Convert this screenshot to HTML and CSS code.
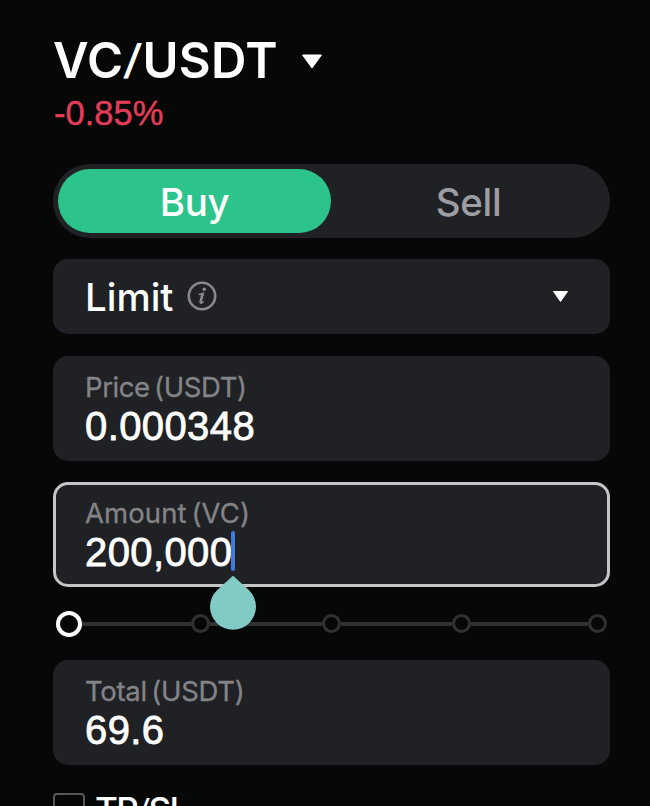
FILE: index.html
```html
<!DOCTYPE html>
<html lang="en">
<head>
<meta charset="utf-8">
<title>VC/USDT</title>
<link rel="stylesheet" href="styles.css">
</head>
<body>
<main class="order">
  <header class="pair">
    <h1 class="pair-name"><span class="pair-text">VC<span class="slash">/</span>USDT</span>
      <svg class="pair-arrow" width="22" height="16" viewBox="0 0 22 16"><path d="M1.5 1h19L11 14z" fill="#fff" stroke="#fff" stroke-linejoin="round"/></svg>
    </h1>
    <p class="change">-0.85%</p>
  </header>

  <div class="side">
    <button class="side-tab side-buy"><span>Buy</span></button>
    <button class="side-tab side-sell"><span>Sell</span></button>
  </div>

  <div class="type">
    <span class="type-name">Limit</span>
    <svg class="info" width="30" height="30" viewBox="0 0 30 30"><circle cx="15" cy="15" r="13.2" fill="none" stroke="#87898c" stroke-width="2.6"/><circle cx="17.2" cy="8.2" r="1.8" fill="#87898c"/><path d="M11.6 13.4q2.2-.2 4.6-1.2l-2.4 8.8q-.4 1.8.8 1.2l2.1-1.8" fill="none" stroke="#87898c" stroke-width="1.5"/><path d="M15.6 12.8l-2.3 9" stroke="#87898c" stroke-width="2.6"/></svg>
    <svg class="type-arrow" width="17" height="13" viewBox="0 0 17 13"><path d="M1.5 1.5h14L8.5 11.5z" fill="#fff" stroke="#fff" stroke-linejoin="round"/></svg>
  </div>

  <section class="field">
    <div class="label label-price">Price (USDT)</div>
    <div class="value">0.000348</div>
  </section>

  <section class="field field-active">
    <div class="label label-amount">Amount (VC)</div>
    <div class="value value-amount"><span>200,000</span><i class="caret"><svg class="handle" width="46" height="54" viewBox="0 0 46 54"><path d="M23 0Q24 0 25 1.5L39 14.2A23 23 0 1 1 7 14.2L21 1.5Q22 0 23 0Z" fill="#82cbc4"/></svg></i></div>
  </section>

  <div class="slider">
    <i class="thumb"></i><i class="rail rail-first"></i><i class="stop"></i><i class="rail"></i><i class="stop"></i><i class="rail"></i><i class="stop"></i><i class="rail rail-last"></i><i class="stop"></i>
  </div>

  <section class="field field-total">
    <div class="label label-total">Total (USDT)</div>
    <div class="value">69.6</div>
  </section>

  <label class="tpsl"><i class="box"></i><span class="tpsl-text">TP<span class="slash">/</span>SL</span></label>
</main>
</body>
</html>
```

FILE: styles.css
```css
* { box-sizing: border-box; }
html, body { margin: 0; height: 806px; overflow: hidden; background: #060807; }
body { font-family: Inter, "Liberation Sans", sans-serif; color: #fff; }

.order { width: 557px; margin-left: 53px; padding-top: 31px; display: flex; flex-direction: column; }

.pair { height: 133px; }
.pair-name { margin: 0; height: 60px; display: flex; align-items: center; font-size: 49px; line-height: 60px; font-weight: 600; letter-spacing: 0.3px; }
.pair-text { width: 248px; }
.pair-arrow { margin-top: 2px; }
.slash { display: inline-block; font-size: 0.83em; line-height: 1; vertical-align: 0.09em; transform: skewX(-7deg); margin: 0 0.04em; }
.change { margin: 2px 0 0; font: 34.5px/40px "Liberation Sans", Arial, sans-serif; padding-left: 1px; color: #e33d59; -webkit-text-stroke: 0.4px #e33d59; }

.side { height: 74px; padding: 5px; display: flex; border-radius: 37px; background: #202124; }
.side-tab { border: 0; padding: 2px 0 0; height: 64px; width: 273px; border-radius: 32px; background: none; font: 500 38.5px/62px Inter, sans-serif; letter-spacing: -0.3px; color: #fff; }
.side-buy { background: #2dc48b; }
.side-sell { padding-left: 2px; color: #9d9ea3; }

.type { height: 75px; margin-top: 21px; padding: 0 41px 0 32px; display: flex; align-items: center; border-radius: 15px; background: #202124; }
.type-name { width: 88px; font-size: 38.5px; line-height: 46px; font-weight: 500; }
.info { margin: -1px 0 0 14px; }
.type-arrow { margin-left: auto; }

.field { height: 105px; margin-top: 22px; padding: 15px 32px; border-radius: 15px; background: #202124; }
.field-active { margin-top: 21px; padding: 12px 29px; border: 3px solid #c4c5c6; }
.field-total { margin-top: 23px; }
.label { font-size: 27.5px; line-height: 32px; color: #838488; letter-spacing: -0.4px; word-spacing: -3px; white-space: nowrap; -webkit-text-stroke: 0.3px #838488; }
.label-amount { letter-spacing: 0.1px; }
.label-total { letter-spacing: -0.3px; }
.value { height: 46px; font: 40px/47px "Liberation Sans", Arial, sans-serif; letter-spacing: 0.4px; display: flex; -webkit-text-stroke: 0.8px #fff; }
.value-amount span { width: 146px; }

.caret { position: relative; flex: none; width: 4px; height: 40px; margin-top: 2px; border-radius: 2px; background: #3e7bdb; }
.handle { position: absolute; left: -21px; top: 45px; }

.slider { height: 27px; margin: 23px 0 0; padding: 0 3px; display: flex; align-items: center; }
.thumb { flex: none; width: 26px; height: 26px; border: 4px solid #fff; border-radius: 50%; }
.rail { flex: 111; height: 4px; background: #303133; }
.rail-first { flex: 109; }
.rail-last { flex: 117; }
.stop { flex: none; width: 19px; height: 19px; border: 3px solid #303133; border-radius: 50%; }

.tpsl { margin-top: 28px; display: flex; }
.box { width: 32px; height: 32px; border: 2px solid #55575b; border-radius: 4px; }
.tpsl-text { margin-left: 10px; font-size: 35px; line-height: 34px; font-weight: 500; letter-spacing: -1.6px; }
```
